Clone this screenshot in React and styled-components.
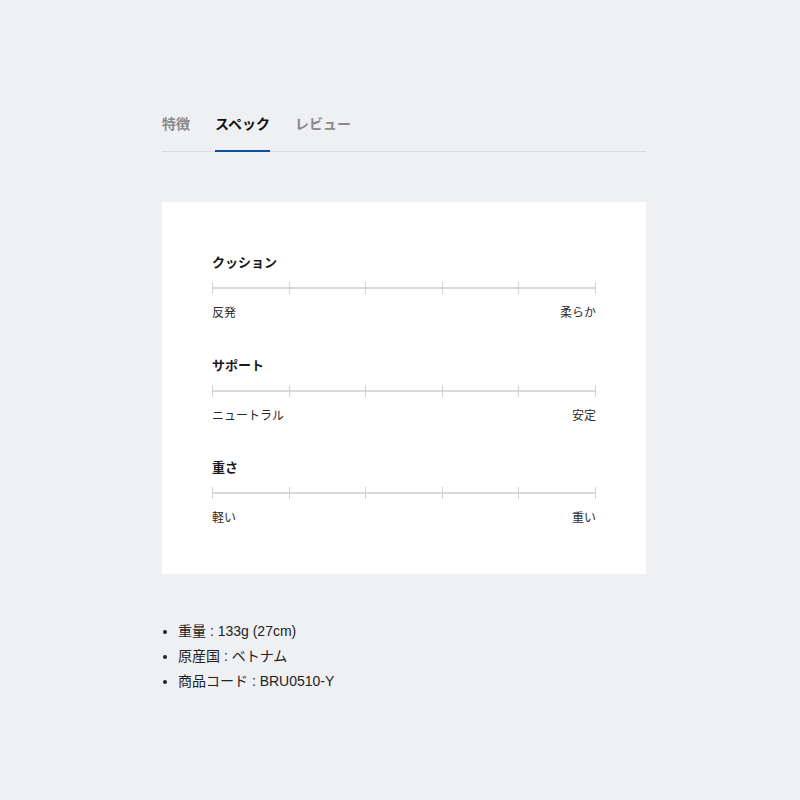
import React, { useState } from "react";
import styled, { createGlobalStyle } from "styled-components";

const GlobalStyle = createGlobalStyle`
  html, body {
    margin: 0;
    padding: 0;
    background: #eff0f3;
  }
  body {
    font-family: "Liberation Sans", "Noto Sans CJK JP", sans-serif;
    color: #1f1f1f;
  }
`;

const Page = styled.div`
  width: 484px;
  padding: 113px 0 80px 162px;
`;

const TabBar = styled.div`
  display: flex;
  gap: 25px;
  border-bottom: 1px solid #d8dadd;
`;

const Tab = styled.button`
  appearance: none;
  background: none;
  border: none;
  padding: 0 0 17px;
  margin: 0 0 -1px;
  font-family: "Noto Sans CJK JP", sans-serif;
  font-size: 14px;
  line-height: 20px;
  font-weight: 700;
  color: ${(p) => (p.$active ? "#111" : "#8a8a8a")};
  border-bottom: 2px solid ${(p) => (p.$active ? "#0d4fa3" : "transparent")};
  cursor: pointer;
`;

const Card = styled.div`
  margin-top: 50px;
  background: #fff;
  padding: 50px 50px 48px;
  display: flex;
  flex-direction: column;
  gap: 33.5px;
`;

const Section = styled.div`
  display: flex;
  flex-direction: column;
`;

const Title = styled.div`
  font-family: "Noto Sans CJK JP", sans-serif;
  font-size: 13px;
  line-height: 20px;
  font-weight: 700;
  color: #1a1a1a;
`;

const Track = styled.div`
  margin-top: 10px;
  height: 12px;
  display: flex;
  justify-content: space-between;
  background-image: linear-gradient(#dadada, #dadada);
  background-size: 100% 2px;
  background-position: 0 5px;
  background-repeat: no-repeat;
`;

const Tick = styled.span`
  width: 1px;
  height: 12px;
  background: #d2d2d2;
`;

const Labels = styled.div`
  margin-top: 9px;
  display: flex;
  justify-content: space-between;
  font-family: "Noto Sans CJK JP", sans-serif;
  font-size: 12px;
  line-height: 18px;
  color: #2a2a2a;
`;

const List = styled.ul`
  margin: 45px 0 0;
  padding-left: 16px;
  font-family: "Liberation Sans", "Noto Sans CJK JP", sans-serif;
  font-size: 14px;
  line-height: 25px;
  color: #222;
`;

const Item = styled.li`
  padding-left: 0;
`;

const specs = [
  { title: "クッション", left: "反発", right: "柔らか" },
  { title: "サポート", left: "ニュートラル", right: "安定" },
  { title: "重さ", left: "軽い", right: "重い" },
];

export default function App() {
  const [tab, setTab] = useState(1);
  const tabs = ["特徴", "スペック", "レビュー"];
  return (
    <>
      <GlobalStyle />
      <Page>
        <TabBar>
          {tabs.map((t, i) => (
            <Tab key={t} $active={i === tab} onClick={() => setTab(i)}>
              {t}
            </Tab>
          ))}
        </TabBar>
        <Card>
          {specs.map((s) => (
            <Section key={s.title}>
              <Title>{s.title}</Title>
              <Track>
                {[0, 1, 2, 3, 4, 5].map((k) => (
                  <Tick key={k} />
                ))}
              </Track>
              <Labels>
                <span>{s.left}</span>
                <span>{s.right}</span>
              </Labels>
            </Section>
          ))}
        </Card>
        <List>
          <Item>重量 : 133g (27cm)</Item>
          <Item>原産国 : ベトナム</Item>
          <Item>商品コード : BRU0510-Y</Item>
        </List>
      </Page>
    </>
  );
}
